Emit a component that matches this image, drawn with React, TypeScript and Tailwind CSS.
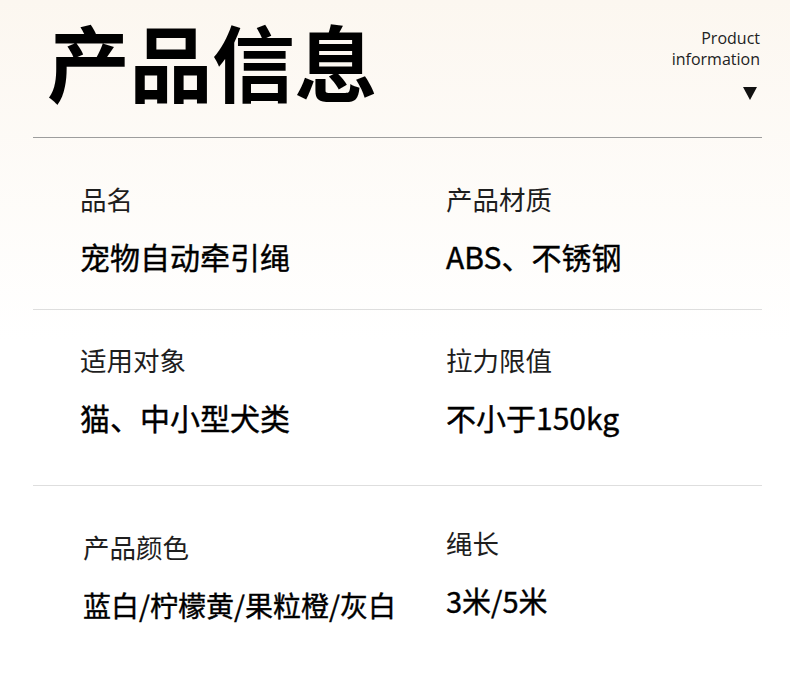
import React from 'react';

interface SpecItem {
    label: string;
    value: string;
    size?: string;
}

const rows: { left: SpecItem; right: SpecItem; className: string }[] = [
    {
        left: { label: '品名', value: '宠物自动牵引绳' },
        right: { label: '产品材质', value: 'ABS、不锈钢' },
        className: 'h-[172px] pt-[48px]',
    },
    {
        left: { label: '适用对象', value: '猫、中小型犬类' },
        right: { label: '拉力限值', value: '不小于150kg' },
        className: 'h-[176px] pt-[37px]',
    },
    {
        left: { label: '产品颜色', value: '蓝白/柠檬黄/果粒橙/灰白', size: 'text-[28px] mt-[30px]' },
        right: { label: '绳长', value: '3米/5米', size: 'text-[29px] mt-[29px]' },
        className: 'h-[195px] pt-[48px]',
    },
];

const cjk = "font-['Noto_Sans_CJK_SC','Noto_Sans',sans-serif]";

const Spec: React.FC<{ item: SpecItem; className?: string }> = ({ item, className }) => (
    <div className={className}>
        <p className="text-[26.5px] leading-none text-[#1e1e1e]">{item.label}</p>
        <p className={`${item.size ?? 'text-[30px] mt-[28px]'} leading-none text-black [-webkit-text-stroke:0.4px_black]`}>
            {item.value}
        </p>
    </div>
);

const App: React.FC = () => {
    return (
        <div className={`w-[790px] h-[681px] overflow-hidden bg-gradient-to-b from-[#fcf7f0] via-white to-white ${cjk}`}>
            <div className="ml-[33px] mr-[28px] h-[138px] flex justify-between border-b border-[#9d9d9d]">
                <h1 className="ml-[14px] mt-[19px] text-[83px] leading-none font-bold text-black tracking-[-0.5px]">产品信息</h1>
                <div className="mt-[28px] mr-[2px] flex flex-col items-end">
                    <p className="font-['Open_Sans',sans-serif] text-[16px] leading-[21px] text-[#222] text-right">
                        Product<br />information
                    </p>
                    <span className="mt-[17px] mr-[3px] w-0 h-0 border-l-[7px] border-r-[7px] border-t-[13px] border-l-transparent border-r-transparent border-t-[#111]" />
                </div>
            </div>
            {rows.map((row, i) => (
                <div
                    key={i}
                    className={`ml-[33px] mr-[28px] flex ${row.className} ${i < rows.length - 1 ? 'border-b border-[#dedede]' : ''}`}
                >
                    <Spec item={row.left} className={i === 2 ? 'ml-[50px] w-[363px]' : 'ml-[47px] w-[366px]'} />
                    <Spec item={row.right} className={i === 2 ? '-mt-[4px]' : ''} />
                </div>
            ))}
        </div>
    );
};

export default App;
